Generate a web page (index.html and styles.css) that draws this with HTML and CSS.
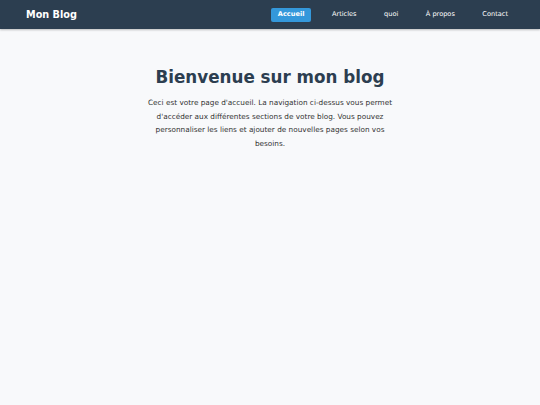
FILE: index.html
```html
<!DOCTYPE html>
<html lang="fr">
<head>
<meta charset="utf-8">
<title>Mon Blog</title>
<link rel="stylesheet" href="styles.css">
</head>
<body>
<header class="site-header">
  <div class="logo">Mon Blog</div>
  <nav class="nav">
    <a class="nav-link active" href="#">Accueil</a>
    <a class="nav-link" href="#">Articles</a>
    <a class="nav-link" href="#">quoi</a>
    <a class="nav-link" href="#">À propos</a>
    <a class="nav-link" href="#">Contact</a>
  </nav>
</header>
<main class="content">
  <h1 class="title">Bienvenue sur mon blog</h1>
  <p class="intro">Ceci est votre page d'accueil. La navigation ci-dessus vous permet d'accéder aux différentes sections de votre blog. Vous pouvez personnaliser les liens et ajouter de nouvelles pages selon vos besoins.</p>
</main>
</body>
</html>
```
FILE: styles.css
```css
html, body {
  margin: 0;
  padding: 0;
}
body {
  background: #f8f9fb;
  font-family: "DejaVu Sans", Verdana, sans-serif;
  color: #333;
  height: 405px;
}
.site-header {
  height: 29px;
  box-sizing: border-box;
  background: #2c3e50;
  display: flex;
  align-items: center;
  justify-content: space-between;
  padding: 0 25.5px 0 26px;
  box-shadow: 0 1px 2px rgba(0,0,0,0.25);
}
.logo {
  color: #fff;
  font-weight: bold;
  font-size: 9.7px;
}
.nav {
  display: flex;
  gap: 14.5px;
}
.nav-link {
  color: #fff;
  text-decoration: none;
  font-size: 6.6px;
  padding: 3.5px 6.5px;
  border-radius: 2px;
  line-height: 7px;
}
.nav-link.active {
  background: #3498db;
  font-weight: bold;
}
.content {
  max-width: 256px;
  margin: 0 auto;
  padding-top: 38px;
  text-align: center;
}
.title {
  margin: 0 0 9px;
  font-size: 16.75px;
  color: #2c3e50;
}
.intro {
  margin: 0;
  font-size: 7.3px;
  line-height: 13.5px;
  color: #333;
}
```
